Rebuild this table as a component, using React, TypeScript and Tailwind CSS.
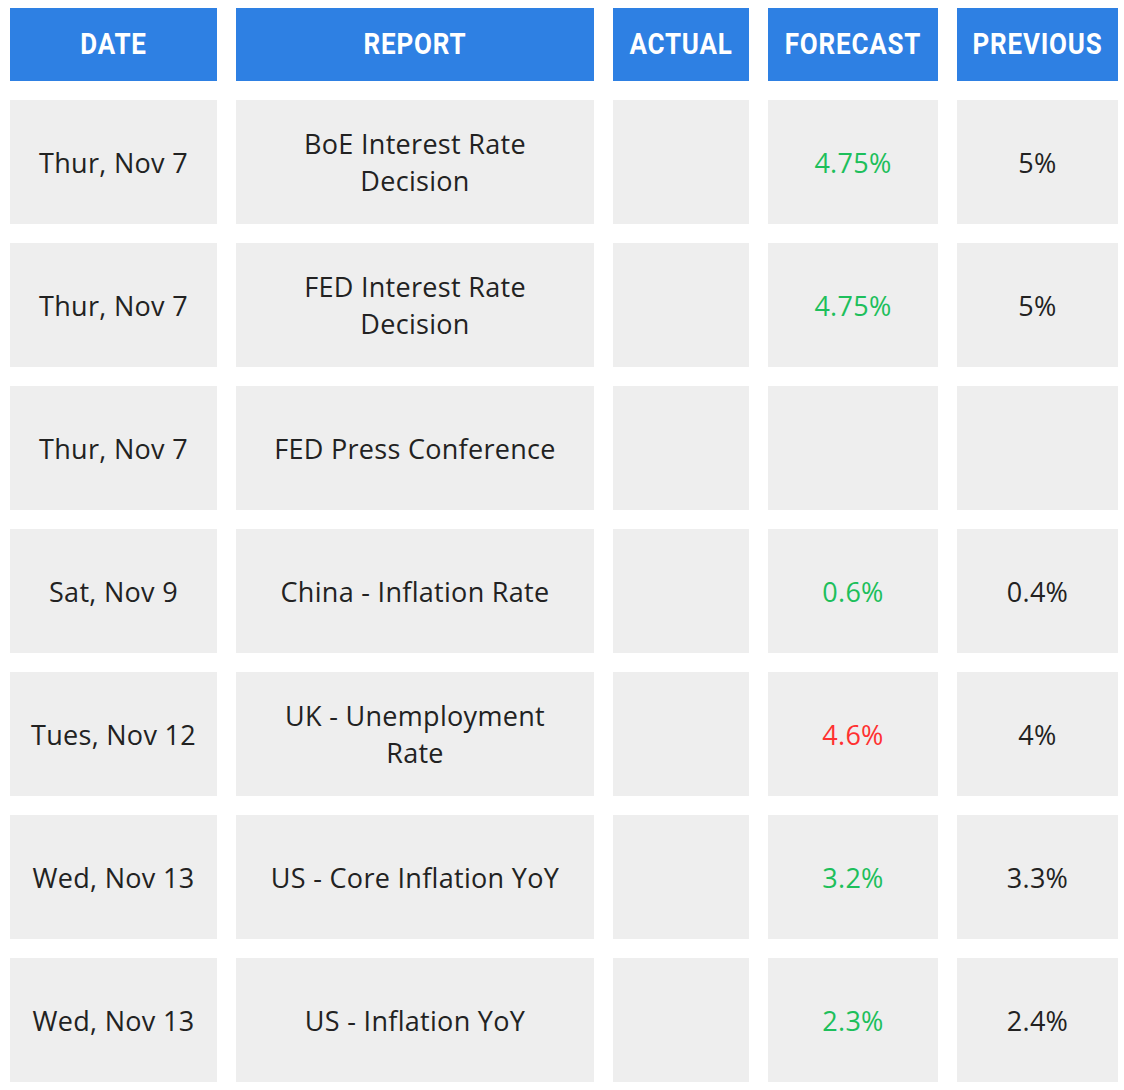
import React from 'react';

type Row = {
  date: string;
  report: string[];
  actual: string;
  forecast: string;
  trend: 'up' | 'down' | 'none';
  previous: string;
};

const rows: Row[] = [
  { date: 'Thur, Nov 7', report: ['BoE Interest Rate', 'Decision'], actual: '', forecast: '4.75%', trend: 'up', previous: '5%' },
  { date: 'Thur, Nov 7', report: ['FED Interest Rate', 'Decision'], actual: '', forecast: '4.75%', trend: 'up', previous: '5%' },
  { date: 'Thur, Nov 7', report: ['FED Press Conference'], actual: '', forecast: '', trend: 'none', previous: '' },
  { date: 'Sat, Nov 9', report: ['China - Inflation Rate'], actual: '', forecast: '0.6%', trend: 'up', previous: '0.4%' },
  { date: 'Tues, Nov 12', report: ['UK - Unemployment', 'Rate'], actual: '', forecast: '4.6%', trend: 'down', previous: '4%' },
  { date: 'Wed, Nov 13', report: ['US - Core Inflation YoY'], actual: '', forecast: '3.2%', trend: 'up', previous: '3.3%' },
  { date: 'Wed, Nov 13', report: ['US - Inflation YoY'], actual: '', forecast: '2.3%', trend: 'up', previous: '2.4%' },
];

const headers = ['DATE', 'REPORT', 'ACTUAL', 'FORECAST', 'PREVIOUS'];

const Cell: React.FC<{ children?: React.ReactNode; color?: string }> = ({ children, color = 'text-[#222222]' }) => (
  <div className={`bg-[#eeeeee] h-[124px] flex flex-col items-center justify-center text-center text-[27px] leading-[37px] tracking-[0.3px] ${color}`}>
    {children}
  </div>
);

export default function App() {
  return (
    <div className="bg-white w-[1124px] h-[1090px] pt-[8px] pl-[10px]" style={{ fontFamily: '"Open Sans", Lato, sans-serif' }}>
      <div className="grid grid-cols-[207px_358px_136px_170px_161px] gap-x-[19px] gap-y-[19px]">
        {headers.map(h => (
          <div
            key={h}
            className="bg-[#2e80e3] h-[73px] flex items-center justify-center text-white text-[26px] font-bold tracking-[0.8px]"
            style={{ fontFamily: 'Roboto, "Liberation Sans", sans-serif' }}
          >
            <span className="inline-block scale-y-[1.12]">{h}</span>
          </div>
        ))}
        {rows.map((r, i) => (
          <React.Fragment key={i}>
            <Cell>{r.date}</Cell>
            <Cell>
              {r.report.map(line => (
                <span key={line}>{line}</span>
              ))}
            </Cell>
            <Cell>{r.actual}</Cell>
            <Cell color={r.trend === 'down' ? 'text-[#ff3131]' : 'text-[#1dbf5b]'}>{r.forecast}</Cell>
            <Cell>{r.previous}</Cell>
          </React.Fragment>
        ))}
      </div>
    </div>
  );
}
